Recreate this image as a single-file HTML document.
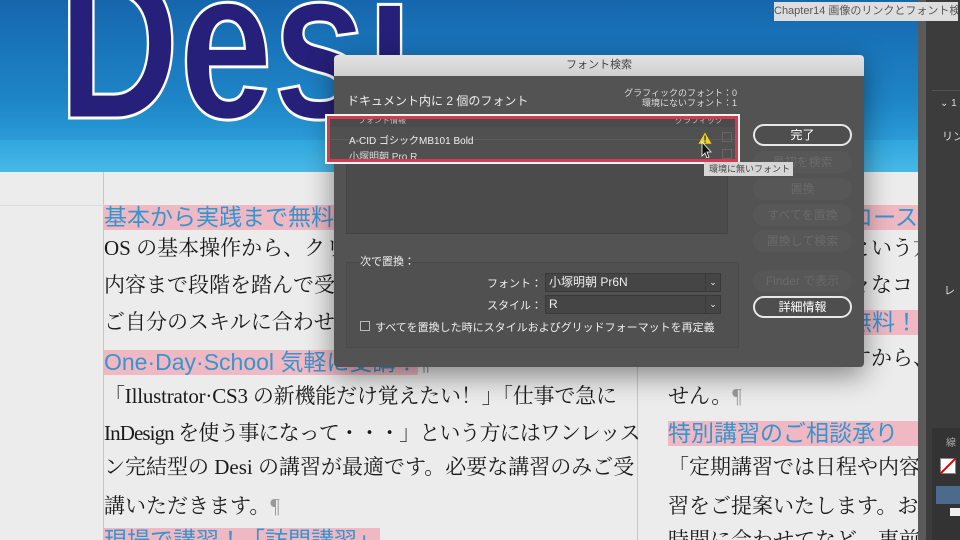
<!DOCTYPE html>
<html><head><meta charset="utf-8"><style>
*{margin:0;padding:0;box-sizing:border-box}
html,body{width:960px;height:540px;overflow:hidden}
body{position:relative;background:#ececec;font-family:"Liberation Sans","Noto Sans CJK JP",sans-serif}
.a{position:absolute;white-space:nowrap}
.h{position:absolute;white-space:nowrap;font-size:23px;line-height:25px;height:25px;color:#3596cf;background:#f0b8c3;font-family:"Liberation Sans","Noto Sans CJK JP",sans-serif}
.b{position:absolute;white-space:nowrap;font-size:21px;line-height:24px;color:#1a1a1a;font-family:"Liberation Serif","Noto Serif CJK SC",serif}
.pm{color:#999}
.btn{position:absolute;left:753px;width:99px;height:22px;border-radius:11px;font-size:12px;line-height:22px;text-align:center;color:#6a6a6a;background:#575757}
.btn.on{border:2px solid #e8e8e8;color:#fff;line-height:18px;background:#4e4e4e}
.d{color:#ddd;font-size:12px}
</style></head><body>
<div class="a" style="left:0;top:0;width:918px;height:172px;background:linear-gradient(#1666ad 0%,#1e86c8 60%,#36aee3 100%)"></div>
<div class="a" style="left:0;top:140px;width:918px;height:32px;background:linear-gradient(#2fa6de,#49b8e6)"></div>
<svg class="a" style="left:0;top:0" width="918" height="172">
<text x="58" y="118" font-family="Liberation Sans" font-weight="bold" font-size="215" textLength="355" lengthAdjust="spacingAndGlyphs" fill="#26207a" stroke="#fff" stroke-width="3">Desi</text>
</svg>
<div class="a" style="left:103px;top:172px;width:1px;height:368px;background:#c5c5d8"></div>
<div class="a" style="left:637px;top:172px;width:1px;height:368px;background:#c5c5d8"></div>
<div class="a" style="left:0;top:205px;width:918px;height:1px;background:#dcdcdc"></div>
<div class="h" style="left:104px;top:205px">基本から実践まで無料</div>
<div class="b" style="left:104px;top:236px">OS の基本操作から、クリエイティブ</div>
<div class="b" style="left:104px;top:273px">内容まで段階を踏んで受講</div>
<div class="b" style="left:104px;top:310px">ご自分のスキルに合わせて</div>
<div class="h" style="left:104px;top:350px">One·Day·School 気軽に受講！<span class="pm" style="background:#ececec">¶</span></div>
<div class="b" style="left:104px;top:384px;letter-spacing:-0.2px">「Illustrator·CS3 の新機能だけ覚えたい！」「仕事で急に</div>
<div class="b" style="left:104px;top:421px;letter-spacing:-0.9px">InDesign を使う事になって・・・」という方にはワンレッス</div>
<div class="b" style="left:104px;top:455px;letter-spacing:0px">ン完結型の Desi の講習が最適です。必要な講習のみご受</div>
<div class="b" style="left:104px;top:494px">講いただきます。<span class="pm">¶</span></div>
<div class="h" style="left:104px;top:528px">現場で講習！「訪問講習」</div>
<div class="h" style="left:668px;top:205px;width:250px;text-align:right;overflow:hidden">コース</div>
<div class="b" style="left:850px;top:236px">という方</div>
<div class="b" style="left:850px;top:273px">々なコ</div>
<div class="h" style="left:668px;top:310px;width:250px;text-align:right">無料！</div>
<div class="b" style="left:850px;top:346px">すから、</div>
<div class="b" style="left:668px;top:384px">せん。<span class="pm">¶</span></div>
<div class="h" style="left:668px;top:421px;width:250px;overflow:hidden">特別講習のご相談承り</div>
<div class="b" style="left:668px;top:455px;width:250px;overflow:hidden">「定期講習では日程や内容が</div>
<div class="b" style="left:668px;top:494px;width:250px;overflow:hidden">習をご提案いたします。お住</div>
<div class="b" style="left:668px;top:528px;width:250px;overflow:hidden">時間に合わせてなど、事前に</div>
<div class="a" style="left:918px;top:0;width:8px;height:540px;background:#5a5a5a"></div>
<div class="a" style="left:926px;top:0;width:34px;height:540px;background:#3c3c3c"></div>
<div class="a" style="left:932px;top:90px;width:28px;height:1px;background:#555"></div>
<div class="a d" style="left:940px;top:98px;font-size:10px">⌄ 1</div>
<div class="a d" style="left:942px;top:128px;font-size:11px">リン</div>
<div class="a d" style="left:944px;top:282px;font-size:11px">レ</div>
<div class="a" style="left:932px;top:428px;width:28px;height:112px;background:#333"></div>
<div class="a d" style="left:946px;top:434px;font-size:10px;color:#aaa">線</div>
<div class="a" style="left:940px;top:458px;width:16px;height:16px;background:#fff;border:1px solid #888"></div>
<svg class="a" style="left:940px;top:458px" width="16" height="16"><line x1="0" y1="16" x2="16" y2="0" stroke="#d00" stroke-width="2"/></svg>
<div class="a" style="left:936px;top:486px;width:24px;height:18px;background:#4b6a8c"></div>
<div class="a" style="left:950px;top:508px;width:10px;height:8px;background:#eee"></div>
<div class="a" style="left:774px;top:2px;width:184px;height:19px;background:#dedede;color:#555;font-size:11px;line-height:19px;text-align:center;overflow:hidden">Chapter14 画像のリンクとフォント検索</div>
<div class="a" style="left:334px;top:55px;width:530px;height:312px;background:#535353;border-radius:4px;box-shadow:0 8px 28px rgba(0,0,0,.45)"></div>
<div class="a" style="left:334px;top:55px;width:530px;height:21px;background:linear-gradient(#e2e2e2,#cfcfcf);border-radius:4px 4px 0 0;font-size:11px;line-height:21px;text-align:center;color:#444">フォント検索</div>
<div class="a" style="left:347px;top:92px;color:#eee;font-size:12px">ドキュメント内に 2 個のフォント</div>
<div class="a" style="left:600px;top:88px;width:137px;text-align:right;color:#ddd;font-size:9px;line-height:10px">グラフィックのフォント：0<br>環境にないフォント：1</div>
<div class="a" style="left:346px;top:118px;width:382px;height:116px;background:#4b4b4b;border:1px solid #444"></div>
<div class="a" style="left:327px;top:116px;width:411px;height:46px;border:3px solid #d43a50;outline:2px solid #f4f4f4;background:#505050"></div>
<div class="a" style="left:330px;top:119px;width:405px;height:40px;overflow:hidden">
<div class="a" style="left:0;top:0;width:405px;height:8px;background:#4b4b4b;font-size:8px;line-height:4px;color:#bbb;padding-left:28px">フォント情報<span style="position:absolute;left:345px">グラフィック</span></div>
<div class="a" style="left:0;top:20px;width:405px;height:1px;background:#5c5c5c"></div>
<div class="a" style="left:19px;top:13px;color:#eee;font-size:10px">A-CID ゴシックMB101 Bold</div>
<div class="a" style="left:19px;top:29px;color:#ddd;font-size:10px">小塚明朝 Pro R</div>
<svg class="a" style="left:368px;top:11px" width="16" height="28"><polygon points="7,2 14,14 0,14" fill="#e8d23a" stroke="#6a5a00" stroke-width="0.6"/><rect x="6.4" y="5.5" width="1.3" height="5" fill="#333"/><rect x="6.4" y="11.5" width="1.3" height="1.3" fill="#333"/><path d="M4,12 L4,26 L7,23 L9,28 L11,27 L9,22 L13,22 Z" fill="#111" stroke="#fff" stroke-width="0.8"/></svg>
<div class="a" style="left:392px;top:13px;width:10px;height:10px;border:1px solid #666"></div>
<div class="a" style="left:392px;top:30px;width:10px;height:10px;border:1px solid #666"></div>
</div>
<div class="btn on" style="top:124px">完了</div>
<div class="btn" style="top:151px">最初を検索</div>
<div class="btn" style="top:178px">置換</div>
<div class="btn" style="top:204px">すべてを置換</div>
<div class="btn" style="top:230px">置換して検索</div>
<div class="btn" style="top:270px">Finder で表示</div>
<div class="btn on" style="top:296px">詳細情報</div>
<div class="a" style="left:704px;top:162px;width:89px;height:14px;background:#d6d6d6;color:#444;font-size:9px;line-height:14px;padding-left:5px">環境に無いフォント</div>
<div class="a" style="left:346px;top:262px;width:393px;height:86px;border:1px solid #4a4a4a;background:#505050"></div>
<div class="a" style="left:360px;top:253px;color:#eee;font-size:11px">次で置換：</div>
<div class="a" style="left:470px;top:275px;width:72px;text-align:right;color:#eee;font-size:11px">フォント：</div>
<div class="a" style="left:545px;top:273px;width:176px;height:19px;background:#454545;border:1px solid #3a3a3a;color:#eee;font-size:12px;line-height:17px;padding-left:3px">小塚明朝 Pr6N<span style="position:absolute;right:0;top:0;width:15px;height:17px;border-left:1px solid #3a3a3a;text-align:center;font-size:9px">⌄</span></div>
<div class="a" style="left:470px;top:297px;width:72px;text-align:right;color:#eee;font-size:11px">スタイル：</div>
<div class="a" style="left:545px;top:295px;width:176px;height:19px;background:#454545;border:1px solid #3a3a3a;color:#eee;font-size:12px;line-height:17px;padding-left:3px">R<span style="position:absolute;right:0;top:0;width:15px;height:17px;border-left:1px solid #3a3a3a;text-align:center;font-size:9px">⌄</span></div>
<div class="a" style="left:360px;top:321px;width:10px;height:10px;border:1px solid #bbb;background:#4a4a4a"></div>
<div class="a" style="left:375px;top:319px;color:#eee;font-size:11px">すべてを置換した時にスタイルおよびグリッドフォーマットを再定義</div>
</body></html>
